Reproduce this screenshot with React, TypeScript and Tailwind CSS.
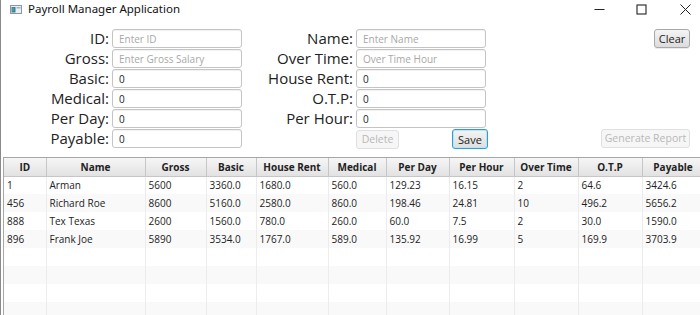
import React from "react";

const cols = [
  { h: "ID", w: 42 },
  { h: "Name", w: 99 },
  { h: "Gross", w: 61 },
  { h: "Basic", w: 50 },
  { h: "House Rent", w: 72 },
  { h: "Medical", w: 58 },
  { h: "Per Day", w: 63 },
  { h: "Per Hour", w: 65 },
  { h: "Over Time", w: 64 },
  { h: "O.T.P", w: 64 },
  { h: "Payable", w: 62 },
];

const rows: string[][] = [
  ["1", "Arman", "5600", "3360.0", "1680.0", "560.0", "129.23", "16.15", "2", "64.6", "3424.6"],
  ["456", "Richard Roe", "8600", "5160.0", "2580.0", "860.0", "198.46", "24.81", "10", "496.2", "5656.2"],
  ["888", "Tex Texas", "2600", "1560.0", "780.0", "260.0", "60.0", "7.5", "2", "30.0", "1590.0"],
  ["896", "Frank Joe", "5890", "3534.0", "1767.0", "589.0", "135.92", "16.99", "5", "169.9", "3703.9"],
  ["", "", "", "", "", "", "", "", "", "", ""],
  ["", "", "", "", "", "", "", "", "", "", ""],
  ["", "", "", "", "", "", "", "", "", "", ""],
  ["", "", "", "", "", "", "", "", "", "", ""],
];

const font = { fontFamily: '"Open Sans", "Noto Sans", sans-serif' } as React.CSSProperties;

function Field({ value, placeholder }: { value?: string; placeholder?: string }) {
  return (
    <div className="h-[19px] w-[130px] rounded-[3px] border border-[#c4c4c4] bg-white shadow-[inset_0_1px_1px_rgba(0,0,0,0.06)] flex items-center px-[6px] text-[10px] leading-none">
      {value !== undefined ? (
        <span className="text-[#222]">{value}</span>
      ) : (
        <span className="text-[#a8a8a8]">{placeholder}</span>
      )}
    </div>
  );
}

function Label({ children }: { children: React.ReactNode }) {
  return (
    <div className="h-[19px] flex items-center justify-end pr-[3px] text-[15px] leading-none text-[#222]">
      {children}
    </div>
  );
}

export default function App() {
  return (
    <div className="w-[700px] h-[315px] bg-white overflow-hidden relative border-l border-[#8a8a8a]" style={font}>
      {/* Title bar */}
      <div className="h-[18px] flex items-center">
        <svg width="12" height="9" viewBox="0 0 12 9" className="ml-[9px]">
          <rect x="0.5" y="0.5" width="11" height="8" fill="#e8eef2" stroke="#8a98a4" />
          <rect x="1.5" y="2" width="4" height="5.5" fill="#3f7fa8" />
          <rect x="2" y="3" width="2" height="3" fill="#4aa36a" />
          <rect x="6.5" y="2" width="4" height="1.5" fill="#9bb8cc" />
        </svg>
        <span className="ml-[6px] text-[11.5px] text-[#111]" style={{ fontFamily: '"Noto Sans", "Open Sans", sans-serif' }}>
          Payroll Manager Application
        </span>
        <div className="ml-auto flex items-center h-full">
          <svg width="11" height="11" viewBox="0 0 11 11" className="mr-[31px]">
            <line x1="0.5" y1="5.5" x2="10.5" y2="5.5" stroke="#222" strokeWidth="1" />
          </svg>
          <svg width="11" height="11" viewBox="0 0 11 11" className="mr-[33px]">
            <rect x="1" y="1" width="9" height="9" fill="none" stroke="#222" strokeWidth="1.1" />
          </svg>
          <svg width="11" height="11" viewBox="0 0 11 11" className="mr-[9px]">
            <line x1="0.5" y1="0.5" x2="10.5" y2="10.5" stroke="#222" strokeWidth="1" />
            <line x1="10.5" y1="0.5" x2="0.5" y2="10.5" stroke="#222" strokeWidth="1" />
          </svg>
        </div>
      </div>

      {/* Form */}
      <div className="grid grid-cols-[111px_130px_114px_132px_1fr] gap-y-[1px] pt-[11px] pr-[10px]">
        <Label>ID:</Label>
        <Field placeholder="Enter ID" />
        <Label>Name:</Label>
        <Field placeholder="Enter Name" />
        <div className="flex justify-end">
          <button className="h-[19px] w-[36px] rounded-[3px] border border-[#a8a8a8] bg-gradient-to-b from-[#f4f4f4] to-[#dcdcdc] text-[11px] leading-none text-[#222] shadow-[0_1px_0_rgba(0,0,0,0.08)]">
            Clear
          </button>
        </div>

        <Label>Gross:</Label>
        <Field placeholder="Enter Gross Salary" />
        <Label>Over Time:</Label>
        <Field placeholder="Over Time Hour" />
        <div />

        <Label>Basic:</Label>
        <Field value="0" />
        <Label>House Rent:</Label>
        <Field value="0" />
        <div />

        <Label>Medical:</Label>
        <Field value="0" />
        <Label>O.T.P:</Label>
        <Field value="0" />
        <div />

        <Label>Per Day:</Label>
        <Field value="0" />
        <Label>Per Hour:</Label>
        <Field value="0" />
        <div />

        <Label>Payable:</Label>
        <Field value="0" />
        <div />
        <div className="flex items-center justify-between">
          <button className="h-[19px] w-[43px] rounded-[3px] border border-[#e0e0e0] bg-[#f6f6f6] text-[10.5px] leading-none text-[#b8b8b8]">
            Delete
          </button>
          <button className="h-[20px] w-[36px] rounded-[3px] border border-[#2a9fd6] bg-gradient-to-b from-[#f4f4f4] to-[#dedede] text-[11px] leading-none text-[#222] shadow-[inset_0_0_0_1px_#bfe3f4]">
            Save
          </button>
        </div>
        <div className="flex justify-end">
          <button className="h-[19px] w-[89px] rounded-[3px] border border-[#e0e0e0] bg-[#f6f6f6] text-[10.5px] leading-none text-[#b8b8b8]">
            Generate Report
          </button>
        </div>
      </div>

      {/* Table */}
      <div className="mt-[8px] ml-[2px] border-l border-t border-[#a6a6a6] overflow-hidden">
        <table className="table-fixed border-collapse text-[10px] text-[#222]" style={{ width: 700 }}>
          <colgroup>
            {cols.map((c) => (
              <col key={c.h} style={{ width: c.w }} />
            ))}
          </colgroup>
          <thead>
            <tr className="h-[18px] bg-gradient-to-b from-[#f6f6f6] to-[#e2e2e2]">
              {cols.map((c) => (
                <th
                  key={c.h}
                  className="border-r border-b border-[#c6c6c6] text-center font-bold text-[10px] leading-none text-[#222] p-0"
                >
                  {c.h}
                </th>
              ))}
            </tr>
          </thead>
          <tbody>
            {rows.map((r, i) => (
              <tr key={i} className={`h-[18px] ${i % 2 === 0 ? "bg-white" : "bg-[#f9f9f9]"}`}>
                {r.map((v, j) => (
                  <td
                    key={j}
                    className="border-r border-[#ececec] pl-[3px] text-left leading-none whitespace-nowrap overflow-hidden"
                  >
                    {v}
                  </td>
                ))}
              </tr>
            ))}
          </tbody>
        </table>
      </div>
    </div>
  );
}
